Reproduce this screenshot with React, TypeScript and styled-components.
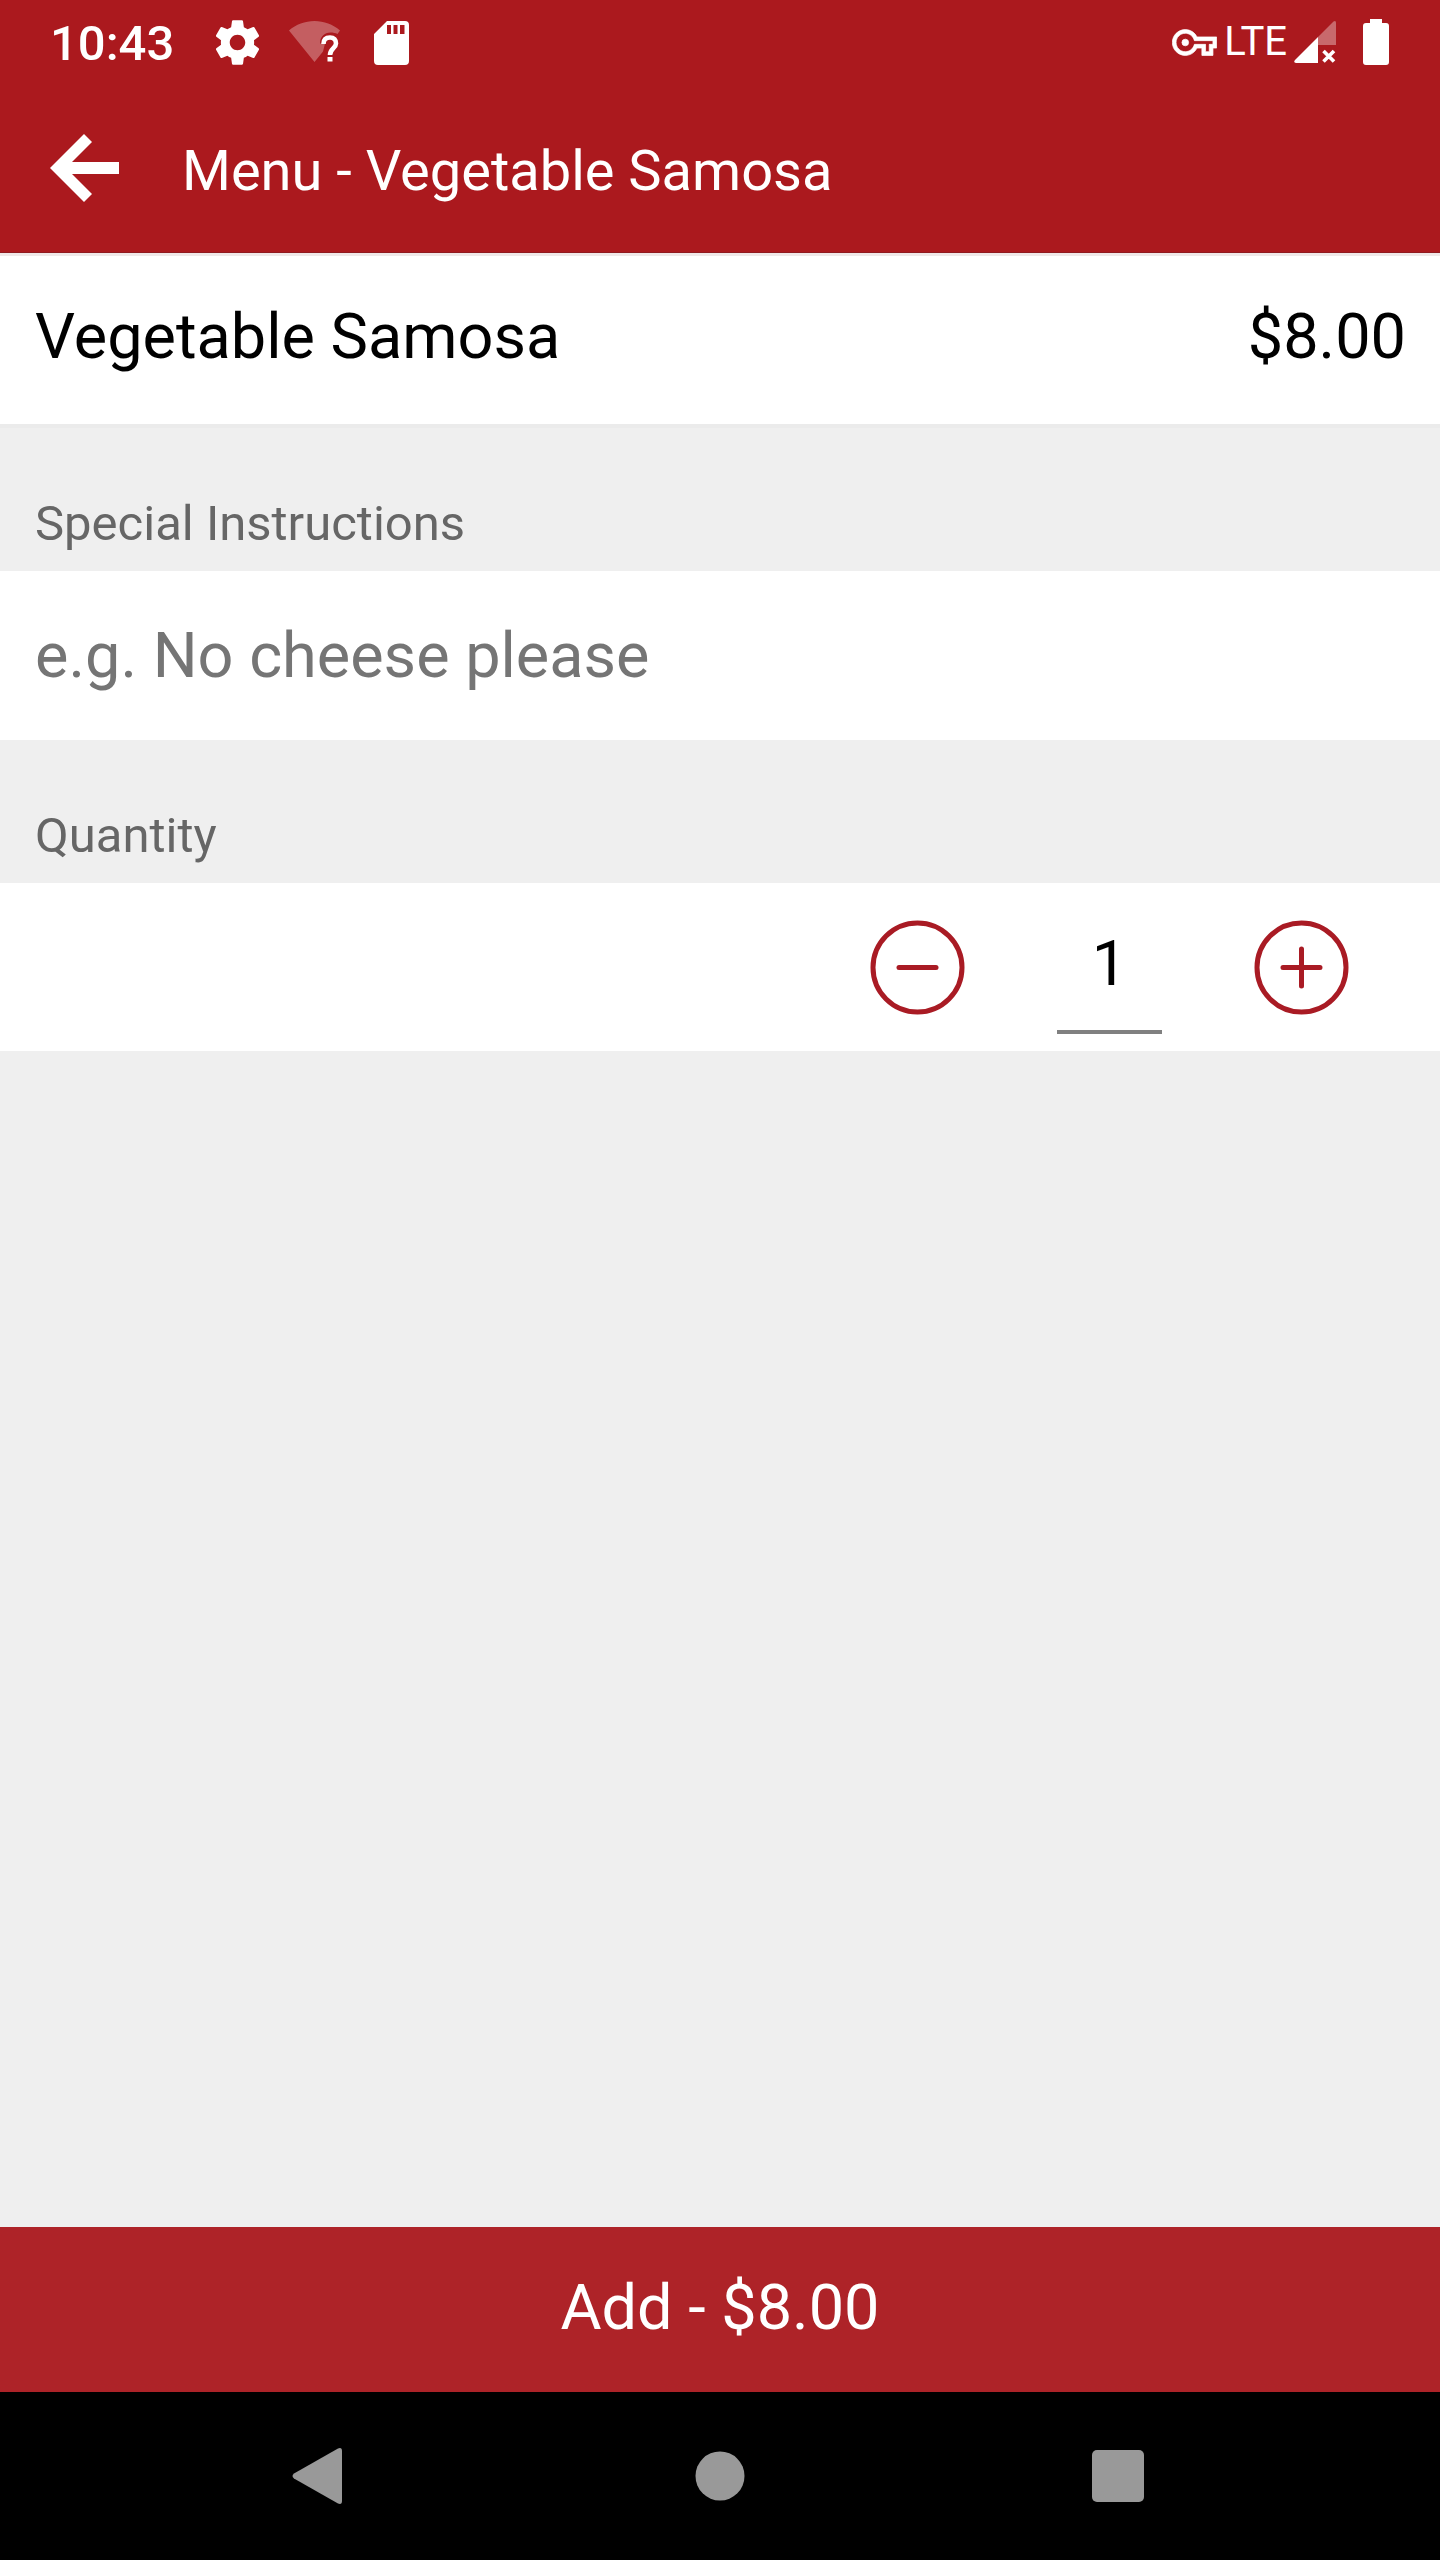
import React, { useState } from "react";
import styled, { createGlobalStyle } from "styled-components";

const GlobalStyle = createGlobalStyle`
  *, *::before, *::after { box-sizing: border-box; }
  body { margin: 0; background: #efefef; }
  body, button, input { font-family: Roboto, "Liberation Sans", sans-serif; }
`;

const Screen = styled.div`
  display: flex;
  flex-direction: column;
  min-height: 100vh;
  background: #efefef;
  color: #000;
`;

const StatusBar = styled.div`
  display: flex;
  align-items: center;
  justify-content: space-between;
  height: 84px;
  padding: 0 51px 0 50px;
  background: #ab191e;
  color: #fff;
`;

const StatusGroup = styled.div<{ $gap: number }>`
  display: flex;
  align-items: center;
  gap: ${(p) => p.$gap}px;
`;

const Clock = styled.time`
  padding-top: 4px;
  margin-right: 12px;
  font-size: 49px;
  font-weight: 500;
  line-height: 56px;
`;

const Network = styled.span`
  font-family: "Liberation Sans Narrow", Roboto, sans-serif;
  font-size: 40px;
  line-height: 48px;
`;

const AppBar = styled.header`
  display: flex;
  align-items: center;
  gap: 62px;
  height: 169px;
  padding: 0 48px;
  background: #ab191e;
  border-bottom: 1px solid #8f1a20;
  color: #fff;
`;

const IconButton = styled.button`
  display: flex;
  align-items: center;
  justify-content: center;
  padding: 0;
  border: 0;
  background: none;
  color: inherit;
  cursor: pointer;
`;

const Title = styled.h1`
  margin: 0;
  padding-top: 6px;
  font-size: 56px;
  font-weight: 400;
  line-height: 64px;
`;

const Main = styled.main`
  flex: 1;
`;

const ItemRow = styled.div`
  display: flex;
  align-items: center;
  justify-content: space-between;
  height: 175px;
  padding: 0 34px 6px 35px;
  border-top: 3px solid #efe8e8;
  border-bottom: 4px solid #ebebeb;
  background: #fff;
  font-size: 63px;
  line-height: 72px;
`;

const SectionLabel = styled.label`
  display: block;
  padding: 68px 35px 19px;
  color: #666;
  font-size: 49px;
  line-height: 56px;
`;

const InstructionsInput = styled.input`
  display: block;
  width: 100%;
  height: 169px;
  padding: 0 35px;
  border: 0;
  border-radius: 0;
  outline: 0;
  background: #fff;
  color: #000;
  font-size: 63px;

  &::placeholder {
    color: #757575;
    opacity: 1;
  }
`;

const QuantityRow = styled.div`
  display: flex;
  align-items: center;
  justify-content: flex-end;
  gap: 92px;
  height: 168px;
  padding: 0 91px;
  background: #fff;
  color: #a91b24;
`;

const QuantityInput = styled.input`
  width: 105px;
  height: 134px;
  padding: 0 0 4px;
  border: 0;
  border-bottom: 4px solid #808080;
  border-radius: 0;
  outline: 0;
  background: none;
  color: #000;
  font-size: 63px;
  text-align: center;
`;

const AddButton = styled.button`
  height: 165px;
  padding: 0 0 4px;
  border: 0;
  background: #ae2328;
  color: #fff;
  font-size: 63px;
  line-height: 72px;
  cursor: pointer;
`;

const NavBar = styled.nav`
  display: grid;
  grid-template-columns: repeat(3, 1fr);
  height: 168px;
  padding: 0 120px;
  background: #000;
  color: #999;
`;

const GearIcon = () => (
  <svg width="51" height="51" viewBox="0.5 0.5 23 23" fill="currentColor" aria-hidden="true">
    <path d="M19.43 12.98c.04-.32.07-.64.07-.98s-.03-.66-.07-.98l2.11-1.65c.19-.15.24-.42.12-.64l-2-3.46c-.12-.22-.39-.3-.61-.22l-2.49 1c-.52-.4-1.08-.73-1.69-.98l-.38-2.65C14.46 2.18 14.25 2 14 2h-4c-.25 0-.46.18-.49.42l-.38 2.65c-.61.25-1.17.59-1.69.98l-2.49-1c-.23-.09-.49 0-.61.22l-2 3.46c-.13.22-.07.49.12.64l2.11 1.65c-.04.32-.07.65-.07.98s.03.66.07.98l-2.11 1.65c-.19.15-.24.42-.12.64l2 3.46c.12.22.39.3.61.22l2.49-1c.52.4 1.08.73 1.69.98l.38 2.65c.03.24.24.42.49.42h4c.25 0 .46-.18.49-.42l.38-2.65c.61-.25 1.17-.59 1.69-.98l2.49 1c.23.09.49 0 .61-.22l2-3.46c.12-.22.07-.49-.12-.64l-2.11-1.65zM12 15.5c-1.93 0-3.5-1.57-3.5-3.5s1.57-3.5 3.5-3.5 3.5 1.57 3.5 3.5-1.57 3.5-3.5 3.5z" />
  </svg>
);

const WifiIcon = () => (
  <svg width="51" height="51" viewBox="0 0 51 51" aria-hidden="true">
    <path
      d="M25.5 45L0 13.500C7 7.500 16 4 25.500 4S44 7.500 51 13.500L48.500 17C46.500 16 44 15.500 41.500 15.500C35.500 15.500 31 19.500 31 26.500H36L34 34.500Z"
      fill="#fff"
      fillOpacity="0.3"
    />
    <path d="M34.500 27C34.500 22.500 37 20.500 41 20.500S47 23 47 26.500C47 31 41 31.500 41 38" fill="none" stroke="#fff" strokeWidth="4.600" />
    <rect x="38.500" y="40" width="5" height="4.500" fill="#fff" />
  </svg>
);

const SdCardIcon = () => (
  <svg width="51" height="51" viewBox="0 0 51 51" fill="currentColor" fillRule="evenodd" aria-hidden="true">
    <path d="M21 4H39Q43 4 43 8V44Q43 48 39 48H12Q8 48 8 44V17ZM21 8V17H25V8ZM27.500 8V17H31.500V8ZM34 8V17H38.500V8Z" />
  </svg>
);

const KeyIcon = () => (
  <svg width="45" height="27" viewBox="-0.2 4.800 24.400 14.400" fill="currentColor" stroke="currentColor" strokeWidth="0.400" aria-hidden="true">
    <path d="M22 19h-6v-4h-2.680c-1.140 2.420-3.600 4-6.320 4-3.860 0-7-3.140-7-7s3.140-7 7-7c2.720 0 5.170 1.580 6.320 4H24v6h-2v4zm-4-2h2v-4h2v-2H11.940l-.23-.67C11.010 8.340 9.110 7 7 7c-2.760 0-5 2.240-5 5s2.240 5 5 5c2.110 0 4.010-1.340 4.710-3.330l.23-.67H18v4z" />
    <circle cx="7" cy="12" r="1.800" />
  </svg>
);

const SignalIcon = () => (
  <svg width="42" height="42" viewBox="0 0 42 42" aria-hidden="true">
    <path d="M24 16L39.500 .5Q42 -1 42 2V24H24Z" fill="#fff" fillOpacity="0.35" />
    <path d="M24 16V42H2Q-1 41.500 1 39Z" fill="#fff" />
    <path d="M29.500 30L40 40.500M40 30L29.500 40.500" stroke="#fff" strokeWidth="3.600" />
  </svg>
);

const BatteryIcon = () => (
  <svg width="26" height="46" viewBox="0 0 26 46" fill="currentColor" aria-hidden="true">
    <path d="M7 0H19V4H23Q26 4 26 7V43Q26 46 23 46H3Q0 46 0 43V7Q0 4 3 4H7Z" />
  </svg>
);

const BackArrowIcon = () => (
  <svg width="72" height="72" viewBox="0 0 72 72" fill="currentColor" aria-hidden="true">
    <path d="M2 36L36 2L44 10L24 30H71V42H24L44 62L36 70Z" />
  </svg>
);

const StepIcon = ({ plus = false }: { plus?: boolean }) => (
  <svg width="95" height="95" viewBox="0 0 95 95" fill="none" stroke="currentColor" strokeWidth="5" strokeLinecap="round" aria-hidden="true">
    <circle cx="47.500" cy="47.500" r="44.500" />
    <path d={plus ? "M29 47.500H66M47.500 29V66" : "M29 47.500H66"} />
  </svg>
);

const NavBackIcon = () => (
  <svg width="56" height="56" viewBox="0 0 56 56" fill="currentColor" aria-hidden="true">
    <path d="M2 25.500L46 .5Q50 -1 50 3V53Q50 57 46 55.500L2 30.500Q-1 28 2 25.500Z" />
  </svg>
);

const NavHomeIcon = () => (
  <svg width="50" height="50" viewBox="0 0 50 50" fill="currentColor" aria-hidden="true">
    <circle cx="25" cy="25" r="24.500" />
  </svg>
);

const NavRecentIcon = () => (
  <svg width="56" height="56" viewBox="0 0 56 56" fill="currentColor" aria-hidden="true">
    <rect x="0" y="2" width="52" height="52" rx="5" />
  </svg>
);

export default function App() {
  const [quantity, setQuantity] = useState(1);
  const [instructions, setInstructions] = useState("");
  const price = 8;

  return (
    <>
      <GlobalStyle />
      <Screen>
        <StatusBar>
          <StatusGroup $gap={26}>
            <Clock>10:43</Clock>
            <GearIcon />
            <WifiIcon />
            <SdCardIcon />
          </StatusGroup>
          <StatusGroup $gap={27}>
            <StatusGroup $gap={7}>
              <KeyIcon />
              <Network>LTE</Network>
              <SignalIcon />
            </StatusGroup>
            <BatteryIcon />
          </StatusGroup>
        </StatusBar>

        <AppBar>
          <IconButton type="button" aria-label="Back">
            <BackArrowIcon />
          </IconButton>
          <Title>Menu - Vegetable Samosa</Title>
        </AppBar>

        <Main>
          <ItemRow>
            <span>Vegetable Samosa</span>
            <span>${price.toFixed(2)}</span>
          </ItemRow>

          <SectionLabel htmlFor="instructions">Special Instructions</SectionLabel>
          <InstructionsInput
            id="instructions"
            type="text"
            placeholder="e.g. No cheese please"
            value={instructions}
            onChange={(e) => setInstructions(e.target.value)}
          />

          <SectionLabel htmlFor="quantity">Quantity</SectionLabel>
          <QuantityRow>
            <IconButton type="button" aria-label="Decrease quantity" onClick={() => setQuantity(Math.max(1, quantity - 1))}>
              <StepIcon />
            </IconButton>
            <QuantityInput
              id="quantity"
              type="text"
              inputMode="numeric"
              value={quantity}
              onChange={(e) => setQuantity(Math.max(1, Number(e.target.value) || 1))}
            />
            <IconButton type="button" aria-label="Increase quantity" onClick={() => setQuantity(quantity + 1)}>
              <StepIcon plus />
            </IconButton>
          </QuantityRow>
        </Main>

        <AddButton type="button">Add - ${(price * quantity).toFixed(2)}</AddButton>

        <NavBar aria-label="System">
          <IconButton type="button" aria-label="System back">
            <NavBackIcon />
          </IconButton>
          <IconButton type="button" aria-label="Home">
            <NavHomeIcon />
          </IconButton>
          <IconButton type="button" aria-label="Recent apps">
            <NavRecentIcon />
          </IconButton>
        </NavBar>
      </Screen>
    </>
  );
}
